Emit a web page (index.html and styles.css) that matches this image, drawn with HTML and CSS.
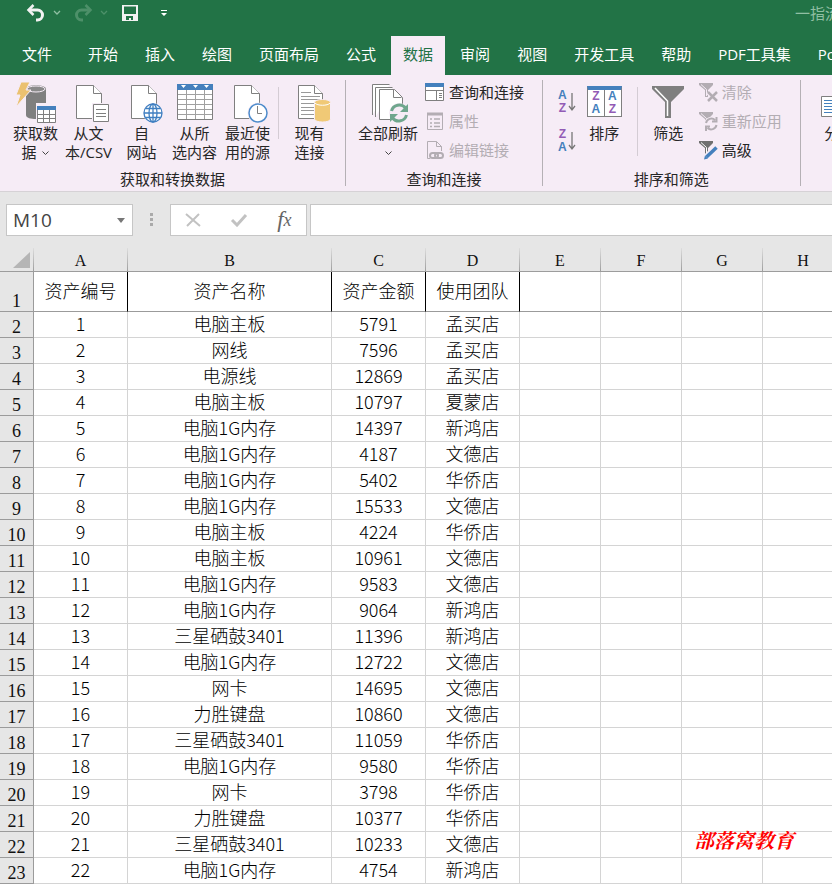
FILE: index.html
```html
<!DOCTYPE html>
<html lang="zh-CN">
<head>
    <meta charset="UTF-8">
    <meta name="viewport" content="width=device-width, initial-scale=1.0">
    <title>资产表</title>
    <link rel="stylesheet" href="styles.css">
</head>
<body>

<header class="titlebar">
    <button class="quick" aria-label="撤消">
        <svg width="20" height="18" viewBox="0 0 20 18" fill="none" stroke="#f2f2f2" stroke-width="3"><path d="M3 6h8.500a5 5 0 0 1 0 10H10"/><path d="M7.500 1L2.500 6l5 5" stroke-width="2.500"/></svg>
    </button>
    <button class="quick" aria-label="撤消选项">
        <svg width="8" height="6" viewBox="0 0 8 6" fill="none" stroke="#8fbfa2" stroke-width="1.300"><path d="M1 1l3 3 3-3"/></svg>
    </button>
    <button class="quick redo" aria-label="恢复">
        <svg width="20" height="18" viewBox="0 0 20 18" fill="none" stroke="#4d9069" stroke-width="3"><path d="M17 6H8.500a5 5 0 0 0 0 10H10"/><path d="M12.500 1l5 5-5 5" stroke-width="2.500"/></svg>
    </button>
    <button class="quick" aria-label="恢复选项">
        <svg width="8" height="6" viewBox="0 0 8 6" fill="none" stroke="#4d9069" stroke-width="1.300"><path d="M1 1l3 3 3-3"/></svg>
    </button>
    <button class="quick save" aria-label="保存">
        <svg width="16" height="16" viewBox="0 0 16 16"><path fill="#f2f2f2" fill-rule="evenodd" d="M0 0h16v16H0zM2 1.500v7.500h12v-7.500zM4 11v4h3v-2h2v2h2v-4z"/></svg>
    </button>
    <button class="quick more" aria-label="自定义快速访问工具栏">
        <svg width="6" height="8" viewBox="0 0 6 8" fill="#fff"><path d="M0 1h6v1H0zM0 4h6L3 7z"/></svg>
    </button>
    <span class="doc-title">一指流</span>
</header>

<nav class="tabs">
    <a href="#" class="file">文件</a>
    <a href="#">开始</a>
    <a href="#">插入</a>
    <a href="#">绘图</a>
    <a href="#">页面布局</a>
    <a href="#">公式</a>
    <a href="#" class="active">数据</a>
    <a href="#">审阅</a>
    <a href="#">视图</a>
    <a href="#">开发工具</a>
    <a href="#">帮助</a>
    <a href="#">PDF工具集</a>
    <a href="#">Power Pivot</a>
</nav>

<div class="ribbon">
    <section class="group get-data">
        <div class="tools">
            <button class="big">
                <svg width="42" height="42" viewBox="0 0 42 42">
                    <path fill="#7f7f7f" d="M11 7c0-5 20-5 20 0v14H21v16c-5 0-10-1-10-4z"/>
                    <ellipse cx="21" cy="7" rx="9" ry="3" fill="#8a8a8a" stroke="#f6ecf6"/>
                    <path fill="#ebc170" stroke="#f6ecf6" d="M6 0h9l-4 8h5L1 25l4-12H1z"/>
                    <path fill="#fff" stroke="#7f7f7f" d="M22.500 26.500h18v14h-18z"/>
                    <path fill="#4480bd" d="M22 24h19v4H22z"/>
                    <path stroke="#7f7f7f" d="M28.500 28v12M34.500 28v12M23 32.500h17M23 36.500h17"/>
                </svg>
                <span>获取数<br>据 <svg class="caret" width="7" height="5" viewBox="0 0 7 5" fill="none" stroke="#444"><path d="M.5.500l3 3 3-3"/></svg></span>
            </button>
            <button class="big">
                <svg width="42" height="42" viewBox="0 0 42 42" fill="#fff" stroke="#7f7f7f">
                    <path d="M8.500 3.500h17l8 8v25h-25z"/><path d="M25.500 3.500v8h8"/>
                    <path stroke="#f6ecf6" stroke-width="3" d="M25.500 22.500h15v17h-15z"/><path d="M25.500 22.500h15v17h-15zM28 27.500h10M28 31.500h10M28 34.500h10"/>
                </svg>
                <span>从文<br>本/CSV</span>
            </button>
            <button class="big">
                <svg width="42" height="42" viewBox="0 0 42 42" fill="#fff" stroke="#7f7f7f">
                    <path d="M10.500 3.500h17l8 8v25h-25z"/><path d="M27.500 3.500v8h8"/>
                    <circle cx="32" cy="31" r="10" fill="#f6ecf6" stroke="none"/>
                    <g stroke="#3f7fc1" stroke-width="1.300"><circle cx="32" cy="31" r="9"/><ellipse cx="32" cy="31" rx="4" ry="9" fill="none"/><path d="M32 22v18M23 31h18M25 26.500h14M25 35.500h14"/></g>
                </svg>
                <span>自<br>网站</span>
            </button>
            <button class="big">
                <svg width="42" height="42" viewBox="0 0 42 42" fill="#fff" stroke="#7f7f7f">
                    <path d="M3.500 2.500h35v35h-35z"/>
                    <path stroke="#a0a0a0" d="M12.500 8v29M21.500 8v29M30.500 8v29M4 12.500h34M4 17.500h34M4 22.500h34M4 27.500h34M4 32.500h34"/>
                    <path fill="#4480bd" stroke="none" d="M3 2h36v6H3z"/>
                    <path stroke="none" d="M7 3h5l-2.500 3zM19 3h5l-2.500 3zM30 3h5l-2.500 3z"/>
                </svg>
                <span>从所<br>选内容</span>
            </button>
            <button class="big">
                <svg width="42" height="42" viewBox="0 0 42 42" fill="#fff" stroke="#7f7f7f">
                    <path d="M7.500 3.500h17l8 8v25h-25z"/><path d="M24.500 3.500v8h8"/>
                    <circle cx="31" cy="31" r="10.500" fill="#f6ecf6" stroke="none"/>
                    <circle cx="31" cy="31" r="9" stroke="#4d8bcb" stroke-width="1.500"/><path fill="none" d="M30.500 24v7.500H35"/>
                </svg>
                <span>最近使<br>用的源</span>
            </button>
            <i class="sep"></i>
            <button class="big">
                <svg width="42" height="42" viewBox="0 0 42 42" fill="#fff" stroke="#7f7f7f">
                    <path d="M9.500 3.500h16l8 8v25h-24z"/><path d="M25.500 3.500v8h8"/>
                    <path stroke="#999" d="M12 10.500h10M12 14.500h19M12 17.500h19M12 21.500h15M12 25.500h13M12 28.500h13M12 32.500h13"/>
                    <path fill="#f0c976" stroke="#f6ecf6" d="M25.500 20.500c0-4 16-4 16 0V37c0 4-16 4-16 0z"/><path fill="none" stroke="#fff" d="M26 21c2 3 13 3 15 0"/>
                </svg>
                <span>现有<br>连接</span>
            </button>
        </div>
        <h2>获取和转换数据</h2>
    </section>

    <section class="group queries">
        <div class="tools">
            <button class="big wide">
                <svg width="42" height="42" viewBox="0 0 42 42" fill="#fff" stroke="#7f7f7f">
                    <path d="M5.500 33V2.500h17M8.500 35V5.500h17"/>
                    <path d="M12.500 7.500h15l8 8v22h-23z"/><path d="M26.500 7.500v8h8"/>
                    <circle cx="32" cy="31" r="10" fill="#f6ecf6" stroke="none"/>
                    <g fill="none" stroke="#6fa68d" stroke-width="3"><path d="M24.500 29a8 8 0 0 1 14-3M39.500 33a8 8 0 0 1-14 3"/></g>
                    <path fill="#6fa68d" stroke="none" d="M41 22v8h-8zM23 40v-8h8z"/>
                </svg>
                <span>全部刷新<br><svg class="caret" width="7" height="5" viewBox="0 0 7 5" fill="none" stroke="#444"><path d="M.5.500l3 3 3-3"/></svg></span>
            </button>
            <div class="stack">
                <button class="small">
                    <svg width="20" height="20" viewBox="0 0 20 20" fill="#fff" stroke="#7f7f7f"><path d="M.5 3.500h18v15H.5z"/><path fill="#4480bd" stroke="none" d="M0 1h19v4H0z"/><path d="M1 8.500h17M11.500 9v9M14 11.500h3M14 13.500h3M14 15.500h3"/></svg>
                    查询和连接
                </button>
                <button class="small" disabled>
                    <svg width="20" height="20" viewBox="0 0 20 20" fill="none" stroke="#b3adb3"><path d="M2.500 2.500h15v16h-15z"/><path stroke-width="3" d="M2 3h16"/><path d="M5 8h2M5 12h2M5 15.500h2M9 8h6M9 12h6M9 15.500h6" stroke-width="1.500"/></svg>
                    属性
                </button>
                <button class="small" disabled>
                    <svg width="20" height="20" viewBox="0 0 20 20" fill="none" stroke="#b3adb3"><path d="M5 18.500H2.500v-17h9l5 5V11M11.500 1.500v5h5"/><g stroke-width="2"><rect x="5" y="13" width="8" height="5" rx="2.500"/><rect x="10" y="13" width="8" height="5" rx="2.500"/></g></svg>
                    编辑链接
                </button>
            </div>
        </div>
        <h2>查询和连接</h2>
    </section>

    <section class="group sorting">
        <div class="tools">
            <div class="order">
                <button aria-label="升序">
                    <span class="az"><b class="blue">A</b><b class="purple">Z</b></span>
                    <svg width="8" height="20" viewBox="0 0 8 20" fill="none" stroke="#777" stroke-width="1.300"><path d="M4 1v17M1 14l3 4 3-4"/></svg>
                </button>
                <button aria-label="降序">
                    <span class="az"><b class="purple">Z</b><b class="blue">A</b></span>
                    <svg width="8" height="20" viewBox="0 0 8 20" fill="none" stroke="#777" stroke-width="1.300"><path d="M4 1v17M1 14l3 4 3-4"/></svg>
                </button>
            </div>
            <button class="big sort">
                <span class="sort-icon">
                    <span class="az"><b class="purple">Z</b><b class="blue">A</b></span>
                    <span class="az"><b class="blue">A</b><b class="purple">Z</b></span>
                </span>
                <span>排序</span>
            </button>
            <i class="sep long"></i>
            <button class="big">
                <svg width="42" height="42" viewBox="0 0 42 42"><path fill="#7f7f7f" d="M5 4h32v3L24 20v16h-6V20L5 7z"/><path fill="none" stroke="#fff" stroke-width="1.500" d="M8 6l12.500 13v15"/></svg>
                <span>筛选</span>
            </button>
            <div class="stack">
                <button class="small" disabled>
                    <svg width="20" height="20" viewBox="0 0 20 20"><path fill="#b3adb3" d="M1 1h14v2L10 8v7H7V8L1 3z"/><path fill="none" stroke="#f6ecf6" d="M3 2.500l5.500 5V14"/><path stroke="#f6ecf6" stroke-width="5" d="M10 10l9 9M19 10l-9 9"/><path stroke="#b3adb3" stroke-width="2.500" d="M10 10l9 9M19 10l-9 9"/></svg>
                    清除
                </button>
                <button class="small" disabled>
                    <svg width="20" height="20" viewBox="0 0 20 20"><path fill="#b3adb3" d="M1 1h14v2L10 8v7H7V8L1 3z"/><path fill="none" stroke="#f6ecf6" d="M3 2.500l5.500 5V14"/><circle cx="13" cy="13" r="7" fill="#f6ecf6"/><path fill="none" stroke="#b3adb3" stroke-width="2" d="M8 12a5.500 5.500 0 0 1 9-3M18.500 14a5.500 5.500 0 0 1-9 3M18.500 6v4.500H14M8 20v-4.500h4"/></svg>
                    重新应用
                </button>
                <button class="small">
                    <svg width="20" height="20" viewBox="0 0 20 20"><path fill="#707070" d="M1 1h14v2L10 8v6H7V8L1 3z"/><path fill="none" stroke="#fff" d="M3 2.500l5.500 5V13"/><path stroke="#f6ecf6" stroke-width="6" d="M8 17L18 7"/><path stroke="#4480bd" stroke-width="3.500" d="M8.500 17L18.500 7.500"/><path fill="#4480bd" d="M6 19.500l1-4 3 3z"/></svg>
                    高级
                </button>
            </div>
        </div>
        <h2>排序和筛选</h2>
    </section>

    <section class="group last">
        <div class="tools">
            <button class="big">
                <svg width="42" height="42" viewBox="0 0 42 42" fill="#fff" stroke="#7f7f7f"><path d="M3.500 14.500h36v20h-36z"/><path stroke="#4480bd" d="M6 18.500h14M6 21.500h14M6 24.500h14M6 27.500h14M6 30.500h14"/></svg>
                <span>分列</span>
            </button>
        </div>
    </section>
</div>

<div class="formula-bar">
    <div class="name-box">
        <input type="text" value="M10" aria-label="名称框">
        <button aria-label="选择名称"><svg width="8" height="5" viewBox="0 0 8 5" fill="#777"><path d="M0 0h8L4 5z"/></svg></button>
    </div>
    <svg class="grip" width="3" height="14" viewBox="0 0 3 14" fill="#aaa"><path d="M0 0h3v3H0zM0 5h3v3H0zM0 10h3v3H0z"/></svg>
    <div class="entry">
        <button aria-label="取消"><svg width="16" height="14" viewBox="0 0 16 14" fill="none" stroke="#c2c2c2" stroke-width="2"><path d="M1 1l14 12M14 1L2 13"/></svg></button>
        <button aria-label="输入"><svg width="18" height="14" viewBox="0 0 18 14" fill="none" stroke="#c2c2c2" stroke-width="3"><path d="M2 7l5 5L16 2"/></svg></button>
        <button class="fx" aria-label="插入函数">f<small>x</small></button>
    </div>
    <input type="text" class="formula" aria-label="编辑栏">
</div>

<main class="sheet">
    <table>
        <colgroup>
            <col class="col-num"><col class="col-data"><col class="col-name"><col class="col-data"><col class="col-data"><col class="col-empty"><col class="col-empty"><col class="col-empty"><col class="col-empty">
        </colgroup>
        <thead>
            <tr><th class="corner"><svg width="17" height="16" viewBox="0 0 17 16" fill="#b5b5b5"><path d="M17 0v16H0z"/></svg></th><th>A</th><th>B</th><th>C</th><th>D</th><th>E</th><th>F</th><th>G</th><th>H</th></tr>
        </thead>
        <tbody>
            <tr class="titles"><th>1</th><td>资产编号</td><td>资产名称</td><td>资产金额</td><td>使用团队</td><td></td><td></td><td></td><td></td></tr>
            <tr><th>2</th><td>1</td><td>电脑主板</td><td>5791</td><td>孟买店</td><td></td><td></td><td></td><td></td></tr>
            <tr><th>3</th><td>2</td><td>网线</td><td>7596</td><td>孟买店</td><td></td><td></td><td></td><td></td></tr>
            <tr><th>4</th><td>3</td><td>电源线</td><td>12869</td><td>孟买店</td><td></td><td></td><td></td><td></td></tr>
            <tr><th>5</th><td>4</td><td>电脑主板</td><td>10797</td><td>夏蒙店</td><td></td><td></td><td></td><td></td></tr>
            <tr><th>6</th><td>5</td><td>电脑1G内存</td><td>14397</td><td>新鸿店</td><td></td><td></td><td></td><td></td></tr>
            <tr><th>7</th><td>6</td><td>电脑1G内存</td><td>4187</td><td>文德店</td><td></td><td></td><td></td><td></td></tr>
            <tr><th>8</th><td>7</td><td>电脑1G内存</td><td>5402</td><td>华侨店</td><td></td><td></td><td></td><td></td></tr>
            <tr><th>9</th><td>8</td><td>电脑1G内存</td><td>15533</td><td>文德店</td><td></td><td></td><td></td><td></td></tr>
            <tr><th>10</th><td>9</td><td>电脑主板</td><td>4224</td><td>华侨店</td><td></td><td></td><td></td><td></td></tr>
            <tr><th>11</th><td>10</td><td>电脑主板</td><td>10961</td><td>文德店</td><td></td><td></td><td></td><td></td></tr>
            <tr><th>12</th><td>11</td><td>电脑1G内存</td><td>9583</td><td>文德店</td><td></td><td></td><td></td><td></td></tr>
            <tr><th>13</th><td>12</td><td>电脑1G内存</td><td>9064</td><td>新鸿店</td><td></td><td></td><td></td><td></td></tr>
            <tr><th>14</th><td>13</td><td>三星硒鼓3401</td><td>11396</td><td>新鸿店</td><td></td><td></td><td></td><td></td></tr>
            <tr><th>15</th><td>14</td><td>电脑1G内存</td><td>12722</td><td>文德店</td><td></td><td></td><td></td><td></td></tr>
            <tr><th>16</th><td>15</td><td>网卡</td><td>14695</td><td>文德店</td><td></td><td></td><td></td><td></td></tr>
            <tr><th>17</th><td>16</td><td>力胜键盘</td><td>10860</td><td>文德店</td><td></td><td></td><td></td><td></td></tr>
            <tr><th>18</th><td>17</td><td>三星硒鼓3401</td><td>11059</td><td>华侨店</td><td></td><td></td><td></td><td></td></tr>
            <tr><th>19</th><td>18</td><td>电脑1G内存</td><td>9580</td><td>华侨店</td><td></td><td></td><td></td><td></td></tr>
            <tr><th>20</th><td>19</td><td>网卡</td><td>3798</td><td>华侨店</td><td></td><td></td><td></td><td></td></tr>
            <tr><th>21</th><td>20</td><td>力胜键盘</td><td>10377</td><td>华侨店</td><td></td><td></td><td></td><td></td></tr>
            <tr><th>22</th><td>21</td><td>三星硒鼓3401</td><td>10233</td><td>文德店</td><td></td><td></td><td></td><td></td></tr>
            <tr><th>23</th><td>22</td><td>电脑1G内存</td><td>4754</td><td>新鸿店</td><td></td><td></td><td></td><td></td></tr>
        </tbody>
    </table>
    <p class="watermark">部落窝教育</p>
</main>

</body>
</html>
```
FILE: styles.css
```css
* {
    box-sizing: border-box;
}
body {
    margin: 0;
    background: #fff;
    color: #262626;
    font-family: "Open Sans", "Noto Sans CJK SC", sans-serif;
    font-size: 15px;
    overflow-x: hidden;
}
button {
    display: flex;
    align-items: center;
    justify-content: center;
    padding: 0;
    border: none;
    background: none;
    color: inherit;
    font: inherit;
}
svg {
    display: block;
    flex: none;
}

/* title bar and tabs */
.titlebar {
    display: flex;
    align-items: center;
    height: 36px;
    padding: 0 0 10px 26px;
    background: #227346;
    overflow: hidden;
}
.quick {
    height: 26px;
    margin-right: 7px;
}
.quick.redo {
    margin-left: 5px;
}
.quick.save {
    margin-left: 7px;
}
.quick.more {
    margin-left: 16px;
}
.doc-title {
    margin: 0 -8px 0 auto;
    color: #90bfa3;
    line-height: 20px;
    white-space: nowrap;
}
.tabs {
    display: flex;
    gap: 3px;
    height: 39px;
    padding-left: 10px;
    background: #227346;
    overflow: hidden;
}
.tabs a {
    flex: none;
    padding: 0 12px;
    color: #fff;
    line-height: 37px;
    text-decoration: none;
}
.tabs .file {
    margin-right: 9px;
}
.tabs .active {
    background: #f6ecf6;
    color: #227346;
}

/* ribbon */
.ribbon {
    display: flex;
    height: 117px;
    padding: 5px 0;
    background: #f6ecf6;
    border-bottom: 1px solid #d6d2d6;
    overflow: hidden;
}
.group {
    display: flex;
    flex: none;
    flex-direction: column;
    justify-content: space-between;
    border-right: 1px solid #b5b0b5;
}
.group h2 {
    margin: 0;
    font-size: 15px;
    font-weight: normal;
    line-height: 14px;
    text-align: center;
}
.tools {
    display: flex;
    align-items: flex-start;
    padding-top: 2px;
}
.big {
    flex: none;
    flex-direction: column;
    width: 53px;
    line-height: 19px;
    white-space: nowrap;
}
.big.wide {
    width: 68px;
}
.caret {
    display: inline-block;
    margin-left: 2px;
    vertical-align: middle;
}
.sep {
    width: 1px;
    height: 52px;
    margin: 5px 4px 0;
    background: #d4ccd4;
}
.sep.long {
    height: 69px;
}
.stack {
    display: flex;
    flex-direction: column;
    margin-top: -5px;
}
.small {
    justify-content: flex-start;
    gap: 4px;
    height: 29px;
    line-height: 20px;
    white-space: nowrap;
}
.small:disabled {
    color: #b3adb3;
}
.get-data .tools {
    padding-left: 9px;
    padding-right: 9px;
}
.queries .tools {
    padding-left: 8px;
    padding-right: 18px;
}
.queries .stack {
    padding-left: 3px;
}
.sorting .tools {
    padding-left: 15px;
    padding-right: 18px;
}
.sorting .stack {
    padding-left: 3px;
}
.order {
    display: flex;
    flex-direction: column;
    gap: 13px;
    padding-top: 7px;
}
.order button {
    gap: 1px;
}
.az {
    display: flex;
    flex-direction: column;
    align-items: center;
    font-family: "Liberation Sans", sans-serif;
    font-size: 12px;
    line-height: 13px;
}
.az b {
    font-weight: bold;
}
.blue {
    color: #4480bd;
}
.purple {
    color: #925bb5;
}
.big.sort {
    margin: 0 2px;
}
.sort-icon {
    display: flex;
    justify-content: space-around;
    width: 35px;
    height: 31px;
    margin: 4px 0 7px;
    border: 1px solid #7f7f7f;
    border-top: 4px solid #4480bd;
    background: linear-gradient(#7f7f7f, #7f7f7f) center / 1px 100% no-repeat #fff;
}
.group.last {
    border: none;
    padding-left: 12px;
}

/* formula bar */
.formula-bar {
    display: flex;
    align-items: center;
    height: 56px;
    padding-left: 6px;
    background: #e6e6e6;
}
.name-box,
.entry,
.formula {
    height: 32px;
    border: 1px solid #c6c6c6;
    background: #fff;
}
.name-box {
    display: flex;
    width: 127px;
}
.name-box input {
    flex: 1;
    min-width: 0;
    padding: 0 6px;
    border: none;
    color: #444;
    font-family: "Open Sans", sans-serif;
    font-size: 19px;
}
.name-box button {
    width: 23px;
}
.grip {
    margin: 0 17px;
}
.entry {
    display: flex;
    align-items: center;
    justify-content: space-around;
    width: 137px;
    margin-right: 3px;
}
.fx {
    color: #666;
    font-family: "Liberation Serif", serif;
    font-size: 23px;
    font-style: italic;
    line-height: 28px;
}
.fx small {
    font-size: 18px;
}
.formula {
    flex: 1;
    min-width: 0;
    border-right: none;
}

/* worksheet */
.sheet {
    position: relative;
    overflow: hidden;
}
table {
    width: 844px;
    table-layout: fixed;
    border-collapse: separate;
    border-spacing: 0;
}
.col-num {
    width: 34px;
}
.col-data {
    width: 94px;
}
.col-name {
    width: 204px;
}
.col-empty {
    width: 81px;
}
th,
td {
    height: 26px;
    padding: 0;
    border-right: 1px solid #d4d4d4;
    border-bottom: 1px solid #d4d4d4;
    text-align: center;
}
td {
    padding-bottom: 3px;
    color: #000;
    font-family: "Noto Sans CJK SC", sans-serif;
    font-size: 18px;
    font-weight: 300;
    line-height: 22px;
}
th {
    padding-top: 4px;
    border-color: #9b9b9b;
    background: #e6e6e6;
    color: #111;
    font-family: "Liberation Serif", serif;
    font-size: 18px;
    font-weight: normal;
    line-height: 20px;
    vertical-align: bottom;
}
thead th {
    height: 24px;
    padding-top: 2px;
    border-right: 1px solid;
    border-bottom-color: #9b9b9b;
    border-image: linear-gradient(#e0e0e0, #9b9b9b) 1;
    font-size: 16px;
}
.corner svg {
    margin: 0 3px 3px auto;
}
.titles th,
.titles td {
    height: 40px;
    border-bottom-color: #9b9b9b;
}
.titles td:nth-child(-n+5) {
    border-right-color: #000;
}
.watermark {
    position: absolute;
    right: 38px;
    bottom: 32px;
    margin: 0;
    color: #f00;
    font-family: "Noto Serif CJK SC", "Noto Sans CJK SC", serif;
    font-size: 20px;
    font-style: italic;
    font-weight: bold;
    line-height: 24px;
}
```
